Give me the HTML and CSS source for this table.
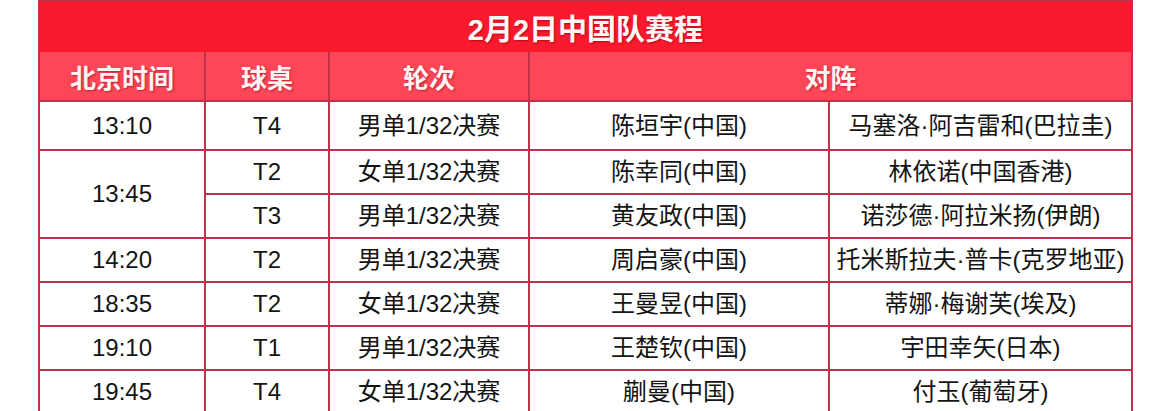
FILE: index.html
```html
<!DOCTYPE html>
<html lang="zh-CN">
<head>
<meta charset="utf-8">
<title>2月2日中国队赛程</title>
<link rel="stylesheet" href="styles.css">
</head>
<body>
<table class="schedule">
  <colgroup>
    <col class="c-time"><col class="c-table"><col class="c-round"><col class="c-a"><col class="c-b">
  </colgroup>
  <thead>
    <tr class="title-row"><th colspan="5">2月2日中国队赛程</th></tr>
    <tr class="head-row"><th>北京时间</th><th>球桌</th><th>轮次</th><th colspan="2">对阵</th></tr>
  </thead>
  <tbody>
    <tr class="first"><td>13:10</td><td>T4</td><td>男单1/32决赛</td><td>陈垣宇(中国)</td><td>马塞洛·阿吉雷和(巴拉圭)</td></tr>
    <tr><td rowspan="2">13:45</td><td>T2</td><td>女单1/32决赛</td><td>陈幸同(中国)</td><td>林依诺(中国香港)</td></tr>
    <tr><td>T3</td><td>男单1/32决赛</td><td>黄友政(中国)</td><td>诺莎德·阿拉米扬(伊朗)</td></tr>
    <tr><td>14:20</td><td>T2</td><td>男单1/32决赛</td><td>周启豪(中国)</td><td>托米斯拉夫·普卡(克罗地亚)</td></tr>
    <tr><td>18:35</td><td>T2</td><td>女单1/32决赛</td><td>王曼昱(中国)</td><td>蒂娜·梅谢芙(埃及)</td></tr>
    <tr><td>19:10</td><td>T1</td><td>男单1/32决赛</td><td>王楚钦(中国)</td><td>宇田幸矢(日本)</td></tr>
    <tr><td>19:45</td><td>T4</td><td>女单1/32决赛</td><td>蒯曼(中国)</td><td>付玉(葡萄牙)</td></tr>
  </tbody>
</table>
</body>
</html>
```
FILE: styles.css
```css
html, body {
  margin: 0;
  padding: 0;
  background: #ffffff;
  overflow: hidden;
}

body {
  font-family: "Liberation Sans", "Noto Sans CJK SC", sans-serif;
  color: #141414;
}

.schedule {
  margin-left: 38px;
  border-collapse: collapse;
  table-layout: fixed;
  width: 1093px;
}

.c-time { width: 166px; }
.c-table { width: 124px; }
.c-round { width: 200px; }
.c-a { width: 300px; }
.c-b { width: 303px; }

.schedule th,
.schedule td {
  border: 2px solid #c3304a;
  padding: 0;
  text-align: center;
  vertical-align: middle;
  white-space: nowrap;
}

.title-row th {
  height: 50px;
  background: #fb1a2d;
  border-bottom: none;
  color: #fff6f6;
  font-size: 29px;
  font-weight: bold;
  letter-spacing: 0;
  text-shadow: 1px 1px 2px rgba(110, 0, 10, 0.55);
}

.head-row th {
  height: 48px;
  background: #fd4657;
  border-top: none;
  color: #fff4f4;
  font-size: 26px;
  font-weight: bold;
  text-shadow: 1px 1px 2px rgba(120, 0, 15, 0.5);
}

.schedule td {
  height: 42px;
  font-size: 24px;
  line-height: 1;
  background: #ffffff;
}

.schedule tr.first td {
  height: 47px;
}
```
